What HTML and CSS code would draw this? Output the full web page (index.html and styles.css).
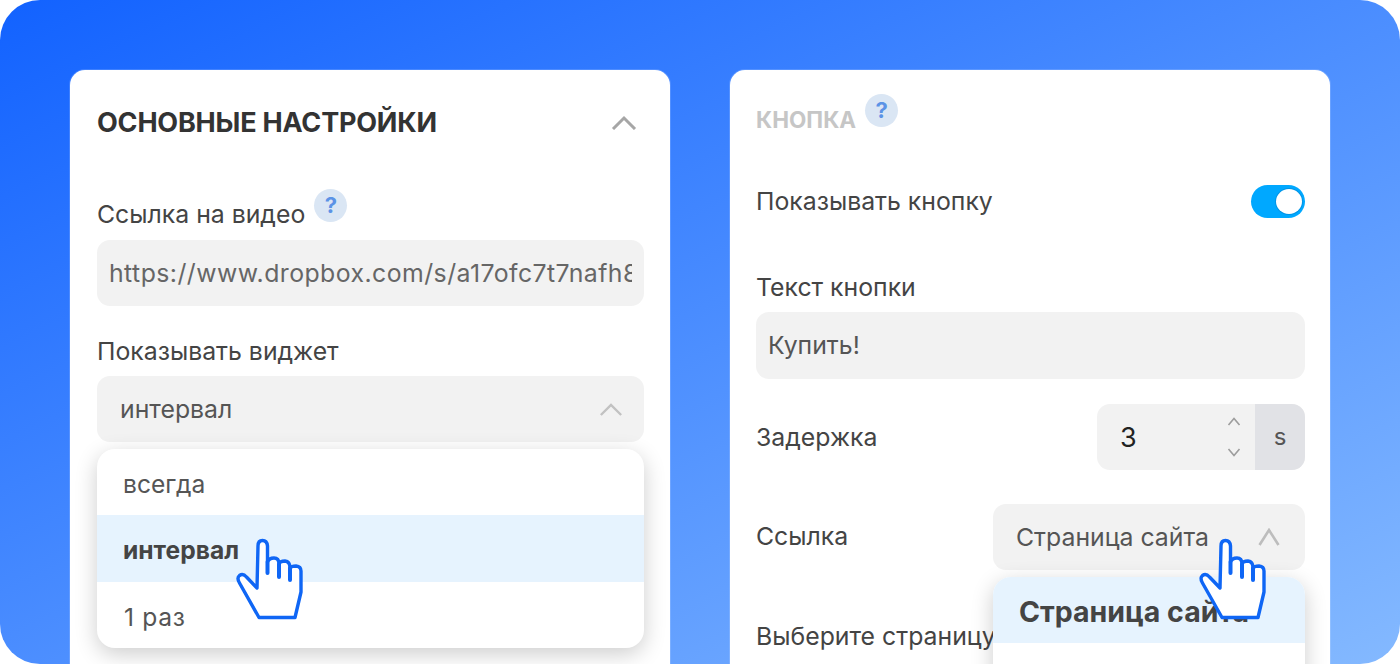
FILE: index.html
```html
<!DOCTYPE html>
<html lang="ru">
<head>
<meta charset="utf-8">
<title>Настройки виджета</title>
<link rel="stylesheet" href="styles.css">
</head>
<body>
<svg class="defs" width="0" height="0" aria-hidden="true">
  <symbol id="hand" viewBox="0 0 100 105">
    <path fill="#fff" stroke="#0f66f5" stroke-width="3.4" stroke-linejoin="round" d="M40 92.5 L20.5 58 Q17.5 53 20.5 50.5 Q24 48 27.5 52 L38 63 L39 21 Q39 15.5 43.5 15.5 Q48 15.5 48.5 21 L48.5 37 Q50 33 55 33 Q60 33 60 39 Q61 36 66 36 Q71 36.5 71 43 Q72.5 41 77 41 Q82 41.5 82 46 L82 67 L76 92.5 Z"/>
    <path fill="none" stroke="#0f66f5" stroke-width="4" stroke-linecap="round" d="M48.5 37 V48 M60 39 V52 M71 43 V55"/>
  </symbol>
</svg>
<main class="frame">
  <section class="panel panel-left">
    <header class="panel-head">
      <h2 class="title">ОСНОВНЫЕ НАСТРОЙКИ</h2>
      <svg class="chev chev-head" viewBox="0 0 26 15"><path d="M2 14 L13 3 L24 14"/></svg>
    </header>
    <div class="label-row">
      <span class="label">Ссылка на видео</span>
      <span class="help">?</span>
    </div>
    <div class="field url"><span class="url-text">https://www.dropbox.com/s/a17ofc7t7nafh8</span></div>
    <div class="label label-block">Показывать виджет</div>
    <div class="dropdown">
      <div class="field select">
        <span>интервал</span>
        <svg class="chev chev-select" viewBox="0 0 26 15"><path d="M2 14 L13 3 L24 14"/></svg>
      </div>
      <ul class="menu menu-left">
        <li class="item">всегда</li>
        <li class="item item-active">интервал</li>
        <li class="item item-once">1 раз</li>
      </ul>
    </div>
    <svg class="hand hand-left"><use href="#hand"/></svg>
  </section>

  <section class="panel panel-right">
    <div class="label-row">
      <h2 class="title title-muted">КНОПКА</h2>
      <span class="help">?</span>
    </div>
    <div class="row row-toggle">
      <span class="label">Показывать кнопку</span>
      <span class="toggle"><span class="knob"></span></span>
    </div>
    <div class="label label-text">Текст кнопки</div>
    <div class="field buy">Купить!</div>
    <div class="row row-delay">
      <span class="label">Задержка</span>
      <div class="stepper">
        <span class="num">3</span>
        <span class="arrows">
          <svg viewBox="0 0 14 9"><path d="M1.5 8 L7 1.5 L12.5 8"/></svg>
          <svg viewBox="0 0 14 9"><path d="M1.5 1 L7 7.5 L12.5 1"/></svg>
        </span>
        <span class="unit">s</span>
      </div>
    </div>
    <div class="row row-link">
      <span class="label">Ссылка</span>
      <div class="dropdown dropdown-link">
        <div class="field select select-link">
          <span>Страница сайта</span>
          <svg class="chev chev-link" viewBox="0 0 22 18"><path d="M1.5 17 L11 2 L20.5 17"/></svg>
        </div>
        <ul class="menu menu-right">
          <li class="item item-big item-active">Страница сайта</li>
          <li class="item item-big"></li>
        </ul>
      </div>
    </div>
    <div class="label label-page">Выберите страницу</div>
    <svg class="hand hand-right"><use href="#hand"/></svg>
  </section>
</main>
</body>
</html>
```

FILE: styles.css
```css
* { box-sizing: border-box; }
html, body { margin: 0; padding: 0; background: #fff; }
body { font-family: Inter, "Noto Sans", sans-serif; color: #444; }
.defs { position: absolute; }
.frame {
  width: 1400px;
  height: 664px;
  border-radius: 40px;
  overflow: hidden;
  background: linear-gradient(to bottom right, #1262ff, #84b9ff);
  display: flex;
  gap: 60px;
  padding: 70px 70px 0;
}
.panel {
  position: relative;
  width: 600px;
  height: 640px;
  flex: none;
  background: #fff;
  border-radius: 15px;
  box-shadow: 0 0 0 1px rgba(255,255,255,.15);
}
.panel-left { padding: 35px 26px 0 27px; }
.panel-right { padding: 24px 25px 0 26px; }
.panel-head { display: flex; justify-content: space-between; align-items: center; height: 34px; margin-bottom: 50px; }
.title { margin: 2px 0 0; font-size: 27px; line-height: 34px; font-weight: 700; letter-spacing: -0.2px; color: #333; white-space: nowrap; }
.title-muted { font-size: 22.5px; color: #c6c6c6; margin-top: 9px; letter-spacing: 0; }
.chev { display: block; fill: none; stroke: #a6a6a6; stroke-width: 2.6; }
.chev-head { width: 26px; height: 15px; margin-right: 7px; stroke-width: 3; }
.chev-select { width: 24px; height: 14px; stroke: #c2c2c2; }
.chev-link { width: 22px; height: 18px; stroke: #bdbdbd; }
.label-row { display: flex; align-items: flex-start; gap: 9px; height: 43px; }
.label-row .label { margin-top: 8px; }
.label { font-size: 24.8px; line-height: 34px; color: #444; white-space: nowrap; }
.label-block { margin-top: 28px; }
.help {
  width: 33px; height: 33px; border-radius: 50%;
  background: #dae6f4; color: #5b93e6;
  font-size: 22px; font-weight: 700; line-height: 33px; text-align: center;
  flex: none;
}
.label-block + .dropdown { margin-top: 8px; }
.field {
  height: 66px;
  border-radius: 13px;
  background: #f2f2f2;
  font-size: 24.8px;
  line-height: 66px;
  color: #555;
  white-space: nowrap;
  overflow: hidden;
}
.url { margin-top: 8px; padding: 0 12px; color: #666; }
.url-text { display: block; overflow: hidden; letter-spacing: 0.45px; }
.dropdown { position: relative; }
.select { display: flex; align-items: center; justify-content: space-between; padding: 0 21px 0 23px; }
.menu {
  position: absolute;
  z-index: 1;
  left: 0; right: 0;
  top: 73px;
  margin: 0; padding: 0;
  list-style: none;
  background: #fff;
  border-radius: 18px;
  overflow: hidden;
  box-shadow: 0 6px 22px rgba(0,0,0,.2);
}
.item { height: 66.3px; line-height: 66px; padding: 2px 26px 0; font-size: 24.6px; color: #555; }
.item-once { padding-left: 27px; letter-spacing: 0.7px; }
.item-active { background: #e6f3fe; font-weight: 700; color: #444; }
.item-big { font-size: 28.5px; padding-left: 26px; }
.hand { position: absolute; z-index: 2; width: 100px; height: 105px; }
.hand-left { left: 149px; top: 455px; }
.hand-right { left: 452px; top: 455px; }
.row { display: flex; align-items: center; justify-content: space-between; }
.row-toggle { margin-top: 48px; height: 33px; }
.row-toggle .label { margin-top: -2px; }
.toggle { width: 54px; height: 33px; border-radius: 17px; background: #00a8ff; padding: 4px 3px 4px 25px; display: block; }
.knob { display: block; width: 26px; height: 25px; border-radius: 50%; background: #fff; box-shadow: 0 0 0 1px rgba(0,90,160,.25); }
.label-text { margin-top: 52px; }
.buy { margin-top: 8px; height: 67px; line-height: 67px; padding: 0 12px; }
.row-delay { margin-top: 25px; height: 66px; }
.stepper { width: 208px; height: 66px; border-radius: 13px; overflow: hidden; background: #f2f2f2; display: flex; align-items: center; }
.num { width: 125px; padding-left: 23px; font-size: 27px; color: #222; }
.arrows { width: 33px; height: 66px; padding-right: 10px; display: flex; flex-direction: column; align-items: center; justify-content: center; gap: 22px; }
.arrows svg { width: 14px; height: 9px; fill: none; stroke: #9d9d9d; stroke-width: 1.6; display: block; }
.unit { width: 50px; height: 66px; margin-left: auto; background: #e1e2e6; text-align: center; line-height: 66px; font-size: 24px; color: #555; }
.row-link { margin-top: 34px; height: 66px; }
.row-link > .label { margin-top: -2px; }
.dropdown-link { width: 312px; }
.select-link { padding: 0 25px 0 23px; }
.label-page { margin-top: 49px; }
```
